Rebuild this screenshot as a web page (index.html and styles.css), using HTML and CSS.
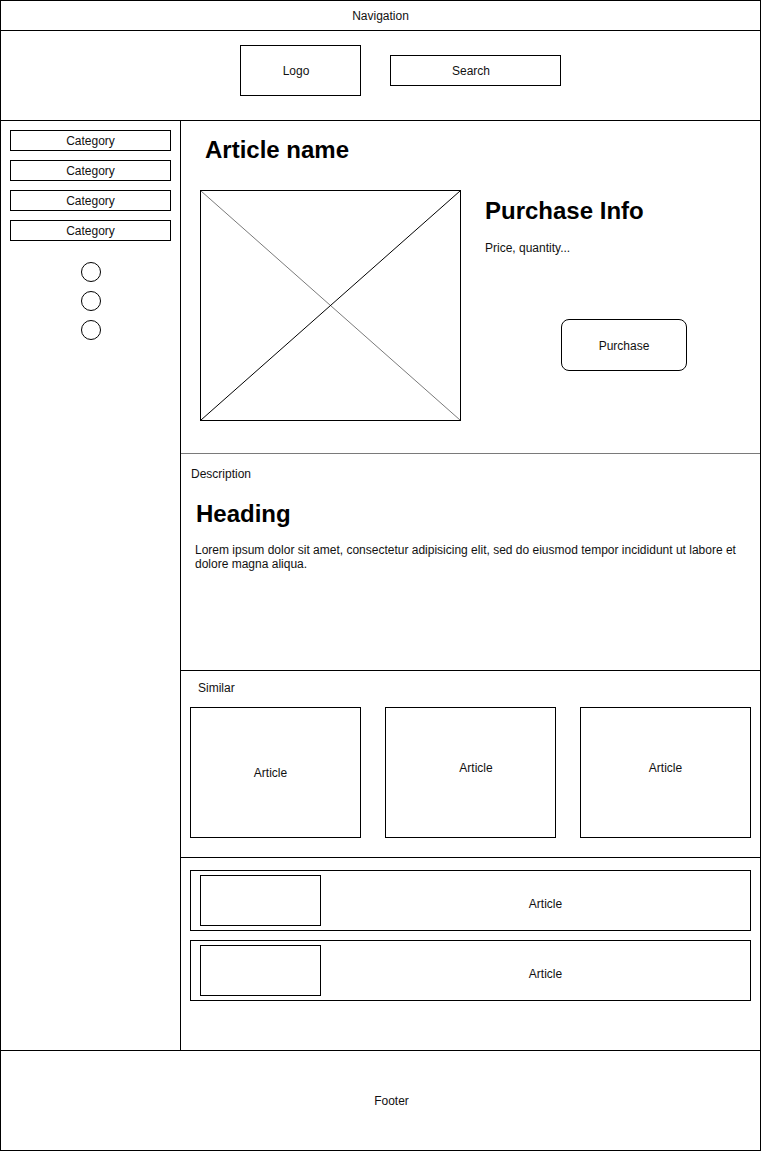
FILE: index.html
```html
<!DOCTYPE html>
<html lang="en">
<head>
<meta charset="utf-8">
<title>Article wireframe</title>
<link rel="stylesheet" href="styles.css">
</head>
<body>
<div class="page">
  <div class="nav">Navigation</div>
  <div class="header">
    <div class="logo">Logo</div>
    <div class="search">Search</div>
  </div>
  <div class="body">
    <aside class="sidebar">
      <div class="category">Category</div>
      <div class="category">Category</div>
      <div class="category">Category</div>
      <div class="category">Category</div>
      <div class="dots">
        <span class="dot"></span>
        <span class="dot"></span>
        <span class="dot"></span>
      </div>
    </aside>
    <main class="main">
      <section class="article">
        <h1 class="title">Article name</h1>
        <div class="article-row">
          <div class="image">
            <svg class="image-x" viewBox="0 0 259 229" preserveAspectRatio="none">
              <line x1="0" y1="0" x2="259" y2="229" stroke="#7a7a7a" stroke-width="1"/>
              <line x1="259" y1="0" x2="0" y2="229" stroke="#000" stroke-width="1"/>
            </svg>
          </div>
          <div class="purchase">
            <h2 class="purchase-title">Purchase Info</h2>
            <p class="price">Price, quantity...</p>
            <div class="buy">Purchase</div>
          </div>
        </div>
      </section>
      <section class="description">
        <div class="label">Description</div>
        <h2 class="heading">Heading</h2>
        <p class="lorem">Lorem ipsum dolor sit amet, consectetur adipisicing elit, sed do eiusmod tempor incididunt ut labore et dolore magna aliqua.</p>
      </section>
      <section class="similar">
        <div class="label similar-label">Similar</div>
        <div class="cards">
          <div class="card card-a">Article</div>
          <div class="card card-b">Article</div>
          <div class="card card-c">Article</div>
        </div>
      </section>
      <section class="list">
        <div class="row">
          <div class="thumb"></div>
          <div class="row-label">Article</div>
        </div>
        <div class="row">
          <div class="thumb"></div>
          <div class="row-label">Article</div>
        </div>
      </section>
    </main>
  </div>
  <footer class="footer">Footer</footer>
</div>
</body>
</html>
```

FILE: styles.css
```css
* {
  box-sizing: border-box;
}

html, body {
  margin: 0;
  padding: 0;
  background: #fff;
}

.page {
  width: 761px;
  height: 1151px;
  border: 1px solid #000;
  display: flex;
  flex-direction: column;
  font-family: "Liberation Sans", Arial, sans-serif;
  font-size: 12px;
  line-height: 14px;
  color: #111;
}

.nav {
  height: 30px;
  border-bottom: 1px solid #000;
  display: flex;
  align-items: center;
  justify-content: center;
}

.header {
  height: 90px;
  border-bottom: 1px solid #000;
  display: flex;
  align-items: flex-start;
  padding-left: 239px;
}

.logo {
  margin-top: 14px;
  width: 121px;
  height: 51px;
  border: 1px solid #000;
  display: flex;
  align-items: center;
  justify-content: center;
  padding-right: 9px;
}

.search {
  margin-top: 24px;
  margin-left: 29px;
  width: 171px;
  height: 31px;
  border: 1px solid #000;
  display: flex;
  align-items: center;
  justify-content: center;
  padding-right: 9px;
}

.body {
  height: 930px;
  border-bottom: 1px solid #000;
  display: flex;
}

.sidebar {
  width: 180px;
  border-right: 1px solid #000;
  padding: 9px 0 0 9px;
  display: flex;
  flex-direction: column;
  gap: 9px;
}

.category {
  width: 161px;
  height: 21px;
  border: 1px solid #000;
  display: flex;
  align-items: center;
  justify-content: center;
}

.dots {
  margin-top: 12px;
  margin-left: 71px;
  display: flex;
  flex-direction: column;
  gap: 9px;
}

.dot {
  display: block;
  width: 20px;
  height: 20px;
  border: 1px solid #000;
  border-radius: 50%;
}

.main {
  flex: 1;
  display: flex;
  flex-direction: column;
}

.article {
  height: 333px;
  border-bottom: 1px solid #7a7a7a;
  padding: 17px 0 0 19px;
}

.title {
  margin: 0 0 0 5px;
  font-size: 24px;
  line-height: 24px;
  font-weight: bold;
  color: #000;
}

.article-row {
  margin-top: 28px;
  display: flex;
  align-items: flex-start;
}

.image {
  width: 261px;
  height: 231px;
  border: 1px solid #000;
  flex: none;
}

.image-x {
  display: block;
  width: 100%;
  height: 100%;
}

.purchase {
  margin-left: 24px;
  padding-top: 9px;
  display: flex;
  flex-direction: column;
  align-items: flex-start;
}

.purchase-title {
  margin: 0;
  font-size: 24px;
  line-height: 24px;
  font-weight: bold;
  color: #000;
}

.price {
  margin: 18px 0 0;
}

.buy {
  margin-top: 64px;
  margin-left: 76px;
  width: 126px;
  height: 52px;
  border: 1px solid #000;
  border-radius: 8px;
  display: flex;
  align-items: center;
  justify-content: center;
  padding-top: 2px;
}

.description {
  height: 217px;
  border-bottom: 1px solid #000;
  padding: 13px 0 0 10px;
}

.heading {
  margin: 21px 0 0 5px;
  font-size: 24px;
  line-height: 24px;
  font-weight: bold;
  color: #000;
}

.lorem {
  margin: 17px 0 0 4px;
  width: 556px;
}

.similar {
  height: 187px;
  border-bottom: 1px solid #000;
  padding: 10px 9px 0 9px;
}

.similar-label {
  margin-left: 8px;
}

.cards {
  margin-top: 12px;
  display: flex;
  gap: 24px;
}

.card {
  width: 171px;
  height: 131px;
  border: 1px solid #000;
  display: flex;
  align-items: center;
  justify-content: center;
}

.card-a {
  padding-right: 10px;
}

.card-b {
  padding-left: 11px;
  padding-bottom: 10px;
}

.card-c {
  padding-bottom: 10px;
}

.list {
  flex: 1;
  padding: 12px 9px 0 9px;
  display: flex;
  flex-direction: column;
  gap: 9px;
}

.row {
  height: 61px;
  border: 1px solid #000;
  display: flex;
  align-items: flex-start;
}

.thumb {
  margin: 4px 0 0 9px;
  width: 121px;
  height: 51px;
  border: 1px solid #000;
  flex: none;
}

.row-label {
  flex: 1;
  align-self: stretch;
  display: flex;
  align-items: center;
  justify-content: center;
  padding: 6px 0 0 20px;
}

.footer {
  height: 99px;
  display: flex;
  align-items: center;
  justify-content: center;
  padding-left: 22px;
}
```
